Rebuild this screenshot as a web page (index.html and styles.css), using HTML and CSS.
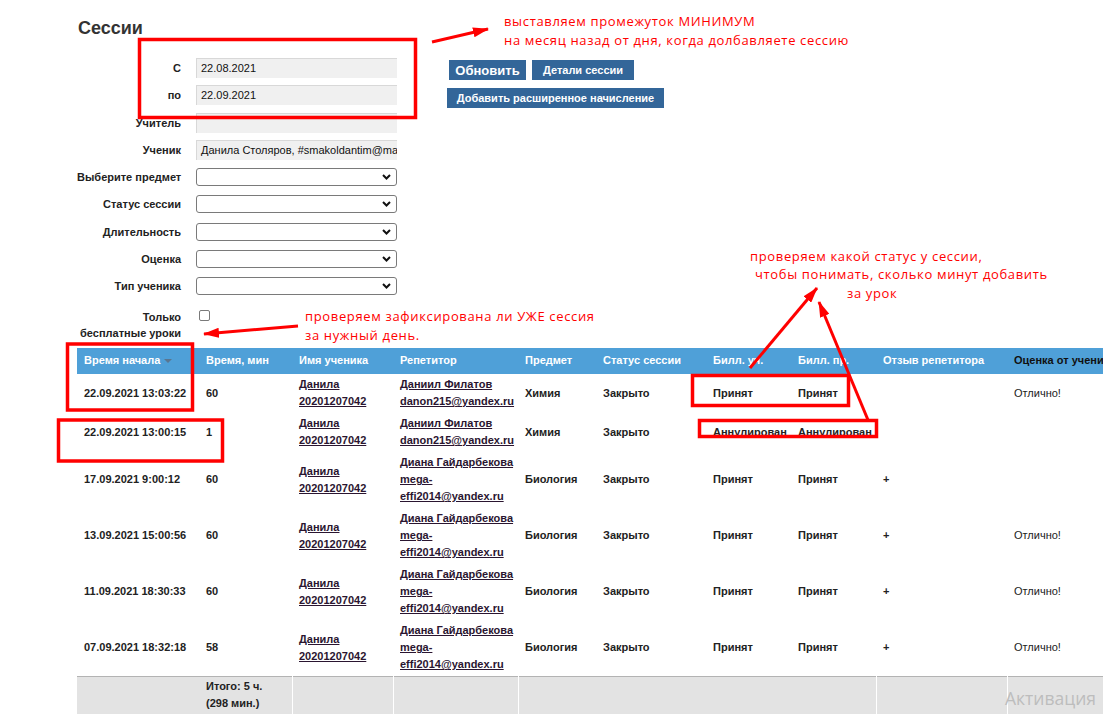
FILE: index.html
```html
<!DOCTYPE html>
<html lang="ru">
<head>
<meta charset="utf-8">
<title>Сессии</title>
<link rel="stylesheet" href="styles.css">
</head>
<body>
<div class="page">
  <h1 class="title">Сессии</h1>
  <div class="filters">
    <div class="form">
      <div class="lbl">С</div><div class="field">22.08.2021</div>
      <div class="lbl">по</div><div class="field">22.09.2021</div>
      <div class="lbl">Учитель</div><div class="field"></div>
      <div class="lbl">Ученик</div><div class="field">Данила Столяров, #smakoldantim@mail.ru</div>
      <div class="lbl">Выберите предмет</div><div class="select"><svg class="chev" width="9" height="6" viewBox="0 0 9 6"><path d="M1 1 L4.5 4.5 L8 1" fill="none" stroke="#111" stroke-width="2"/></svg></div>
      <div class="lbl">Статус сессии</div><div class="select"><svg class="chev" width="9" height="6" viewBox="0 0 9 6"><path d="M1 1 L4.5 4.5 L8 1" fill="none" stroke="#111" stroke-width="2"/></svg></div>
      <div class="lbl">Длительность</div><div class="select"><svg class="chev" width="9" height="6" viewBox="0 0 9 6"><path d="M1 1 L4.5 4.5 L8 1" fill="none" stroke="#111" stroke-width="2"/></svg></div>
      <div class="lbl">Оценка</div><div class="select"><svg class="chev" width="9" height="6" viewBox="0 0 9 6"><path d="M1 1 L4.5 4.5 L8 1" fill="none" stroke="#111" stroke-width="2"/></svg></div>
      <div class="lbl">Тип ученика</div><div class="select"><svg class="chev" width="9" height="6" viewBox="0 0 9 6"><path d="M1 1 L4.5 4.5 L8 1" fill="none" stroke="#111" stroke-width="2"/></svg></div>
      <div class="lbl check-label">Только<br>бесплатные уроки</div><div class="check-cell"><span class="checkbox"></span></div>
    </div>
    <div class="actions">
      <div class="btn-row">
        <button class="btn btn-refresh">Обновить</button>
        <button class="btn btn-details">Детали сессии</button>
      </div>
      <button class="btn btn-add">Добавить расширенное начисление</button>
    </div>
  </div>

  <table class="sessions">
    <colgroup>
      <col class="c1"><col class="c2"><col class="c3"><col class="c4"><col class="c5">
      <col class="c6"><col class="c7"><col class="c8"><col class="c9"><col class="c10">
    </colgroup>
    <thead>
      <tr>
        <th>Время начала<span class="sort"></span></th>
        <th>Время, мин</th>
        <th>Имя ученика</th>
        <th>Репетитор</th>
        <th>Предмет</th>
        <th>Статус сессии</th>
        <th>Билл. уч.</th>
        <th>Билл. пр.</th>
        <th>Отзыв репетитора</th>
        <th class="dark">Оценка от ученика</th>
      </tr>
    </thead>
    <tbody>
      <tr>
        <td>22.09.2021 13:03:22</td><td>60</td>
        <td><a href="#">Данила<br>20201207042</a></td>
        <td><a href="#">Даниил Филатов</a><br><a href="#">danon215@yandex.ru</a></td>
        <td>Химия</td><td>Закрыто</td><td class="nw">Принят</td><td class="nw">Принят</td><td></td><td class="norm">Отлично!</td>
      </tr>
      <tr>
        <td>22.09.2021 13:00:15</td><td>1</td>
        <td><a href="#">Данила<br>20201207042</a></td>
        <td><a href="#">Даниил Филатов</a><br><a href="#">danon215@yandex.ru</a></td>
        <td>Химия</td><td>Закрыто</td><td class="nw">Аннулирован</td><td class="nw">Аннулирован</td><td></td><td></td>
      </tr>
      <tr>
        <td>17.09.2021 9:00:12</td><td>60</td>
        <td><a href="#">Данила<br>20201207042</a></td>
        <td><a href="#">Диана Гайдарбекова</a><br><a href="#">mega-<br>effi2014@yandex.ru</a></td>
        <td>Биология</td><td>Закрыто</td><td class="nw">Принят</td><td class="nw">Принят</td><td>+</td><td></td>
      </tr>
      <tr>
        <td>13.09.2021 15:00:56</td><td>60</td>
        <td><a href="#">Данила<br>20201207042</a></td>
        <td><a href="#">Диана Гайдарбекова</a><br><a href="#">mega-<br>effi2014@yandex.ru</a></td>
        <td>Биология</td><td>Закрыто</td><td class="nw">Принят</td><td class="nw">Принят</td><td>+</td><td class="norm">Отлично!</td>
      </tr>
      <tr>
        <td>11.09.2021 18:30:33</td><td>60</td>
        <td><a href="#">Данила<br>20201207042</a></td>
        <td><a href="#">Диана Гайдарбекова</a><br><a href="#">mega-<br>effi2014@yandex.ru</a></td>
        <td>Биология</td><td>Закрыто</td><td class="nw">Принят</td><td class="nw">Принят</td><td>+</td><td class="norm">Отлично!</td>
      </tr>
      <tr>
        <td>07.09.2021 18:32:18</td><td>58</td>
        <td><a href="#">Данила<br>20201207042</a></td>
        <td><a href="#">Диана Гайдарбекова</a><br><a href="#">mega-<br>effi2014@yandex.ru</a></td>
        <td>Биология</td><td>Закрыто</td><td class="nw">Принят</td><td class="nw">Принят</td><td>+</td><td class="norm">Отлично!</td>
      </tr>
    </tbody>
    <tfoot>
      <tr>
        <td></td><td class="nb">Итого: 5 ч.<br>(298 мин.)</td><td></td><td></td><td colspan="4"></td><td></td><td></td>
      </tr>
    </tfoot>
  </table>
</div>

<svg class="marks" width="1103" height="714" viewBox="0 0 1103 714">
  <defs>
    <marker id="ah" markerUnits="userSpaceOnUse" markerWidth="16" markerHeight="10" refX="15" refY="5" orient="auto">
      <path d="M0 0 L16 5 L0 10 Z" fill="#f00"/>
    </marker>
  </defs>
  <g fill="none" stroke="#f00" stroke-width="3.5">
    <rect x="139.5" y="39.5" width="276" height="78"/>
    <rect x="67.5" y="344" width="125" height="66"/>
    <rect x="58.5" y="420" width="164" height="41"/>
    <rect x="692.5" y="375.5" width="156" height="30"/>
    <rect x="699.5" y="420.5" width="177" height="16"/>
  </g>
  <g stroke="#f00" stroke-width="3" fill="none">
    <line x1="432" y1="42" x2="488" y2="29" marker-end="url(#ah)"/>
    <line x1="298" y1="326" x2="204" y2="334" marker-end="url(#ah)"/>
    <line x1="750" y1="368" x2="817" y2="288" marker-end="url(#ah)"/>
    <line x1="868" y1="420" x2="819" y2="302" marker-end="url(#ah)"/>
  </g>
</svg>

<div class="note note-range">выставляем промежуток МИНИМУМ<br>на месяц назад от дня, когда долбавляете сессию</div>
<div class="note note-free">проверяем зафиксирована ли УЖЕ сессия<br>за нужный день.</div>
<div class="note note-status"><span class="l1">проверяем какой статус у сессии,</span><span class="l2">чтобы понимать, сколько минут добавить</span><span class="l3">за урок</span></div>
<div class="watermark">Активация</div>
</body>
</html>
```
FILE: styles.css
```css
html, body {
  margin: 0;
  padding: 0;
  background: #fff;
}
body {
  position: relative;
  width: 1103px;
  height: 714px;
  overflow: hidden;
  font-family: "Liberation Sans", Arial, sans-serif;
  color: #222;
}
.page {
  padding-left: 77px;
  overflow: hidden;
}
.title {
  margin: 18px 0 0 1px;
  font-size: 18px;
  line-height: 21px;
  font-weight: bold;
  color: #333;
}
.filters {
  display: flex;
  margin-top: 19px;
}
.form {
  display: grid;
  grid-template-columns: 104px 201px;
  grid-template-rows: repeat(9, 20px) auto;
  column-gap: 15px;
  row-gap: 7.3px;
  align-items: center;
}
.lbl {
  text-align: right;
  font-size: 11px;
  font-weight: bold;
  color: #222;
  white-space: nowrap;
}
.field {
  height: 20px;
  background: #f0f0f0;
  box-shadow: inset 1px 1px 0 #d8d8d8;
  font-size: 11px;
  line-height: 20px;
  padding-left: 5px;
  white-space: nowrap;
  overflow: hidden;
  color: #111;
}
.select {
  height: 18px;
  box-sizing: border-box;
  border: 1px solid #7a7a7a;
  border-radius: 3px;
  background: #fff;
  display: flex;
  align-items: center;
  justify-content: flex-end;
  padding-right: 5px;
}
.chev {
  display: block;
}
.check-label {
  align-self: start;
  padding-top: 5px;
  line-height: 16px;
}
.check-cell {
  align-self: start;
  padding-top: 6px;
  padding-left: 3px;
}
.checkbox {
  display: block;
  width: 11px;
  height: 11px;
  box-sizing: border-box;
  border: 1px solid #7a7a7a;
  border-radius: 2px;
  background: #fff;
}
.actions {
  margin-left: 50px;
  padding-top: 2px;
  display: flex;
  flex-direction: column;
  align-items: flex-start;
  gap: 7.5px;
}
.btn-row {
  display: flex;
  gap: 6px;
  padding-left: 2px;
}
.btn {
  height: 20px;
  padding: 0;
  border: none;
  background: #336699;
  color: #fff;
  font-family: "Liberation Sans", Arial, sans-serif;
  font-size: 11px;
  font-weight: bold;
  text-align: center;
}
.btn-refresh {
  width: 77px;
  font-size: 13px;
}
.btn-details {
  width: 102px;
}
.btn-add {
  width: 217px;
}
.sessions {
  margin-top: 7px;
  border-collapse: separate;
  border-spacing: 0;
  table-layout: fixed;
  width: 1070px;
  font-size: 11px;
  font-weight: bold;
}
.c1 { width: 122px; }
.c2 { width: 93px; }
.c3 { width: 101px; }
.c4 { width: 125px; }
.c5 { width: 78px; }
.c6 { width: 110px; }
.c7 { width: 85px; }
.c8 { width: 85px; }
.c9 { width: 131px; }
.c10 { width: 140px; }
.sessions th {
  background: #4fa0d8;
  color: #fff;
  text-align: left;
  padding: 4.5px 3px 4.5px 7px;
  line-height: 17px;
  white-space: nowrap;
  overflow: hidden;
  font-weight: bold;
}
.sessions th.dark {
  color: #111;
}
.sort {
  display: inline-block;
  width: 0;
  height: 0;
  margin-left: 4px;
  vertical-align: middle;
  border-left: 4px solid transparent;
  border-right: 4px solid transparent;
  border-top: 4px solid #5a7690;
}
.sessions td {
  padding: 2.5px 3px 2.5px 7px;
  line-height: 17px;
  vertical-align: middle;
  color: #222;
}
.sessions td.nw {
  white-space: nowrap;
}
.sessions td.norm {
  font-weight: normal;
}
.sessions a {
  color: #2a1530;
  text-decoration: underline;
}
.sessions tfoot td {
  background: #e3e3e3;
  box-shadow: inset 0 1px 0 #b3b3b3;
  border-left: 1px solid #fff;
  height: 34px;
}
.sessions tfoot td:first-child,
.sessions tfoot td.nb {
  border-left: none;
}
.marks {
  position: absolute;
  left: 0;
  top: 0;
  pointer-events: none;
}
.note {
  position: absolute;
  color: #f00;
  font-family: "Open Sans", sans-serif;
  font-size: 13px;
  letter-spacing: 0.65px;
  line-height: 19px;
  white-space: nowrap;
}
.note-range {
  left: 504px;
  top: 12px;
}
.note-free {
  left: 305px;
  top: 307px;
  line-height: 18.5px;
}
.note-status {
  left: 750px;
  top: 247px;
  line-height: 18.3px;
}
.note-status span {
  display: block;
}
.note-status .l2 {
  margin-left: 5px;
}
.note-status .l3 {
  margin-left: 97px;
}
.watermark {
  position: absolute;
  left: 1005px;
  top: 686px;
  font-family: "Open Sans", sans-serif;
  font-size: 17.5px;
  color: #bdbdbd;
  white-space: nowrap;
}
```
